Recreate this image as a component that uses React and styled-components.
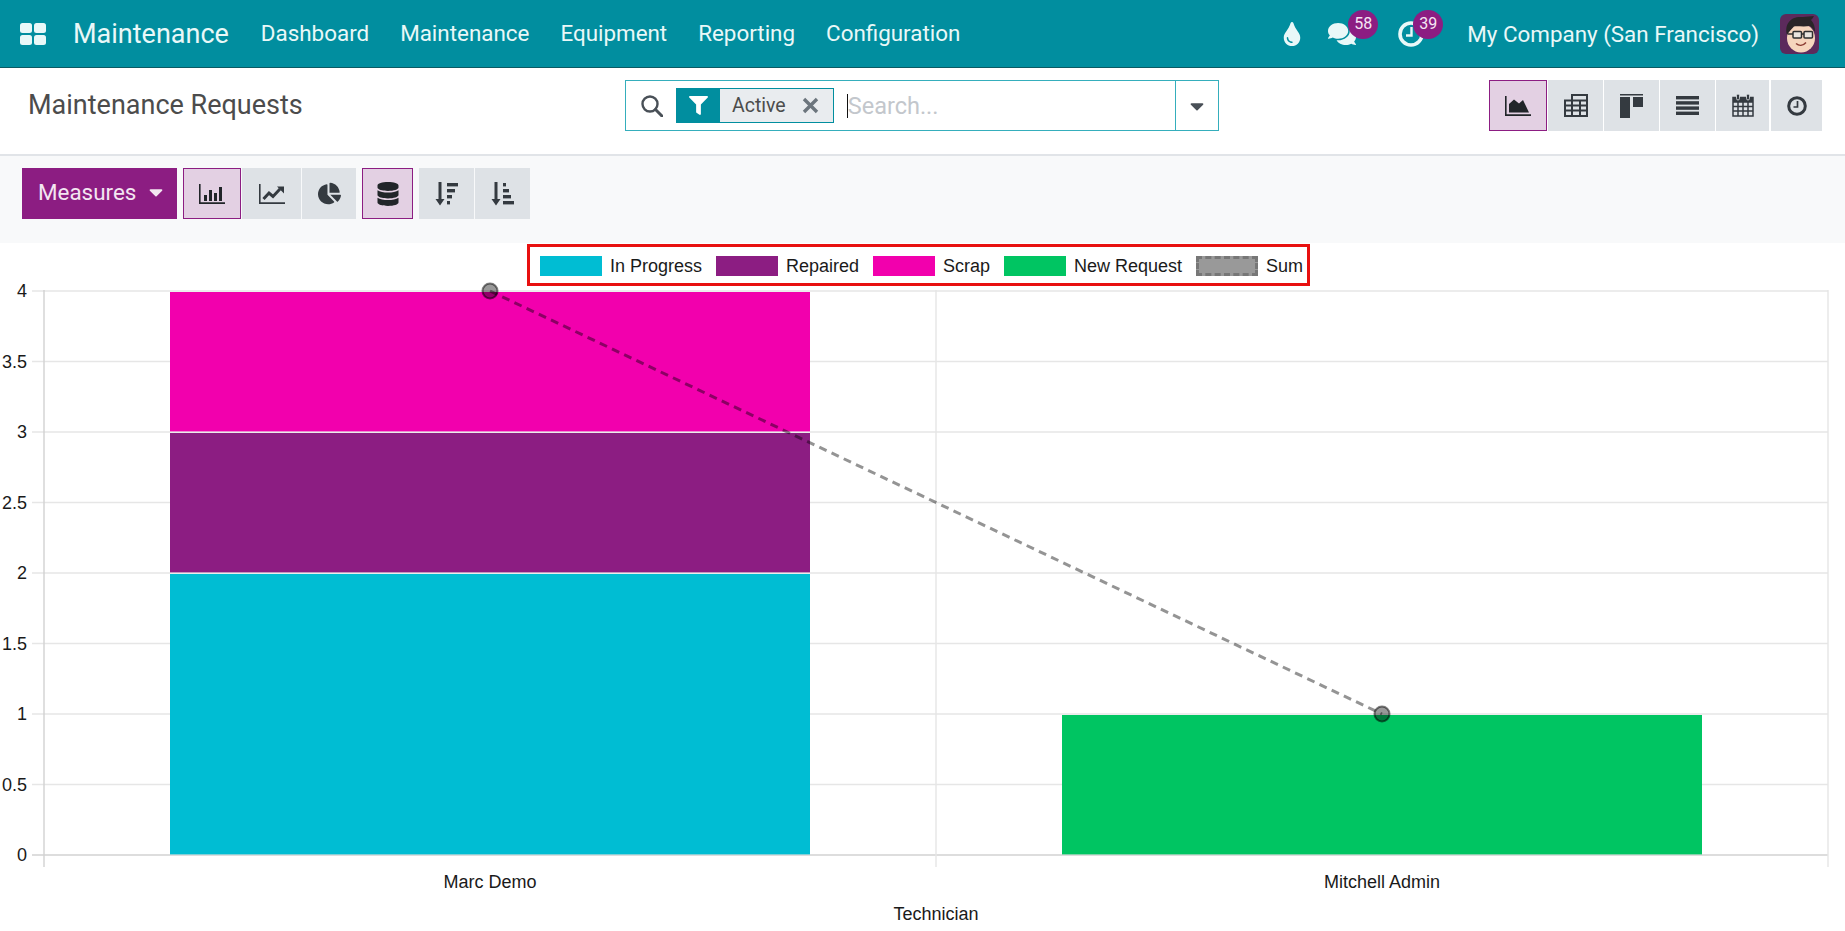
import React from "react";
import styled, { createGlobalStyle } from "styled-components";
import { FaTint, FaComments, FaFilter, FaCaretDown, FaChartPie, FaDatabase } from "react-icons/fa";

const GlobalStyle = createGlobalStyle`
  html, body {
    margin: 0;
    padding: 0;
    height: 931px;
    overflow: hidden;
    background: #fff;
    font-family: Roboto, "Noto Sans", sans-serif;
  }
`;

const Navbar = styled.header`
  display: flex;
  align-items: center;
  box-sizing: border-box;
  height: 68px;
  padding: 0 26px 0 20px;
  background: #018e9f;
  border-bottom: 1px solid #0b5a63;
  color: #e9f8f8;
`;

const Brand = styled.span`
  font-size: 27px;
  margin: 0 32px 0 27px;
`;

const MainMenu = styled.nav`
  display: flex;
  gap: 31px;
  padding-bottom: 1px;
  font-size: 22.4px;
`;

const Systray = styled.div`
  display: flex;
  align-items: center;
  margin-left: auto;
  font-size: 22.4px;
`;

const TrayIcon = styled.div`
  position: relative;
  display: flex;
  align-items: center;
  height: 28px;
  margin-right: ${(p) => p.$mr}px;
`;

const Badge = styled.span`
  position: absolute;
  top: -10px;
  left: ${(p) => p.$left}px;
  width: 30px;
  height: 29px;
  border-radius: 50%;
  background: #8c1d82;
  color: #f5e6f3;
  font-size: 16px;
  line-height: 27px;
  text-align: center;
`;

const Company = styled.span`
  margin-right: 21px;
`;

const ControlPanel = styled.section`
  display: grid;
  grid-template-columns: 597px 594px 1fr;
  box-sizing: border-box;
  height: 88px;
  padding: 12px 23px 0 28px;
  border-bottom: 2px solid #e1e4e8;
  background: #fff;
`;

const Title = styled.h1`
  margin: 7px 0 0;
  font-size: 27px;
  font-weight: 400;
  line-height: 36px;
  color: #4c4c4c;
`;

const SearchBox = styled.div`
  display: flex;
  align-items: center;
  box-sizing: border-box;
  height: 51px;
  border: 1.5px solid #35aebc;
`;

const SearchIcon = styled.div`
  display: flex;
  margin: 0 13px 0 15px;
  color: #495057;
`;

const Facet = styled.div`
  display: flex;
  height: 35px;
  border: 1px solid #018e9f;
  box-sizing: border-box;
  color: #4c4c4c;
  background: #e9ecef;
  font-size: 19.5px;
`;

const FacetIcon = styled.div`
  display: flex;
  align-items: center;
  justify-content: center;
  width: 43px;
  background: #018e9f;
  color: #fff;
  font-size: 19px;
`;

const FacetValue = styled.div`
  display: flex;
  align-items: center;
  gap: 16px;
  padding: 0 14px 0 12px;
`;

const SearchField = styled.div`
  flex: 1;
  display: flex;
  align-items: center;
  margin-left: 13px;
  font-size: 23.5px;
  color: #c3c7cc;
`;

const Caret = styled.div`
  width: 1px;
  height: 24px;
  background: #111;
`;

const SearchToggle = styled.div`
  display: flex;
  align-items: center;
  justify-content: center;
  align-self: stretch;
  width: 42px;
  border-left: 1.5px solid #35aebc;
  color: #495057;
  font-size: 22px;
`;

const ButtonRow = styled.div`
  display: flex;
  justify-content: ${(p) => (p.$end ? "flex-end" : "flex-start")};
`;

const IconButton = styled.button`
  display: flex;
  align-items: center;
  justify-content: center;
  box-sizing: border-box;
  width: ${(p) => p.$w}px;
  height: 51px;
  padding: 0;
  margin-left: ${(p) => p.$ml || 0}px;
  border: ${(p) => (p.$active ? "1.5px solid #8c1d82" : "none")};
  background: ${(p) => (p.$active ? "#e3d0e3" : "#dee2e6")};
  color: ${(p) => (p.$active ? "#212529" : "#343a40")};
  font-size: 23px;
`;

const Toolbar = styled.section`
  display: flex;
  box-sizing: border-box;
  height: 87px;
  padding: 12px 22px 0;
  background: #f8f9fa;
`;

const MeasuresButton = styled.button`
  display: flex;
  align-items: center;
  gap: 9px;
  box-sizing: border-box;
  width: 155px;
  height: 51px;
  padding: 0 0 3px 16px;
  margin-right: 6px;
  border: none;
  background: #8c1d82;
  color: #f3e6f1;
  font-family: inherit;
  font-size: 22.4px;
`;

const ChartArea = styled.main`
  display: flex;
  flex-direction: column;
  align-items: center;
  background: #fff;
  font-family: "Liberation Sans", Arial, sans-serif;
`;

const Legend = styled.div`
  display: flex;
  align-items: center;
  gap: 14px;
  box-sizing: border-box;
  height: 42px;
  margin: 1px 8px 0 0;
  padding: 2px 4px 0 10px;
  border: 3px solid #e81010;
  color: #1a1a1a;
  font-size: 18px;
`;

const LegendItem = styled.div`
  display: flex;
  align-items: center;
  gap: 8px;
`;

const Swatch = styled.span`
  box-sizing: border-box;
  width: 62px;
  height: 20px;
  background: ${(p) => p.$color};
  border: ${(p) => (p.$dashed ? "3px dashed #777" : "none")};
`;

const ChartSvg = styled.svg`
  display: block;
  flex: none;
  overflow: visible;
`;

const AxisText = styled.text`
  fill: #1a1a1a;
  font-size: 18px;
  font-family: "Liberation Sans", Arial, sans-serif;
`;

const Ico = ({ w, h, children }) => (
  <svg width={w} height={h} viewBox={`0 0 ${w} ${h}`} fill="currentColor" aria-hidden="true">
    {children}
  </svg>
);

const AppsIcon = () => (
  <Ico w={26} h={22}>
    <rect x="0" y="0" width="12" height="10" rx="2.5" />
    <rect x="14" y="0" width="12" height="10" rx="2.5" />
    <rect x="0" y="12" width="12" height="10" rx="2.5" />
    <rect x="14" y="12" width="12" height="10" rx="2.5" />
  </Ico>
);

const MagnifyIcon = () => (
  <Ico w={22} h={22}>
    <circle cx="9" cy="9" r="7.5" fill="none" stroke="currentColor" strokeWidth="2.4" />
    <path d="M14.5 14.5L21 21" stroke="currentColor" strokeWidth="3" strokeLinecap="round" />
  </Ico>
);

const CloseIcon = () => (
  <Ico w={17} h={17}>
    <path d="M2 2L15 15M15 2L2 15" stroke="#6c757d" strokeWidth="3.4" />
  </Ico>
);

const ActivityIcon = () => (
  <Ico w={26} h={26}>
    <circle cx="13" cy="13" r="11" fill="none" stroke="currentColor" strokeWidth="3.6" />
    <path d="M13.500 6v8.500H8" fill="none" stroke="currentColor" strokeWidth="2.4" />
  </Ico>
);

const BarsIcon = () => (
  <Ico w={26} h={20}>
    <path d="M0 0h1.6v18.2H26V20H0z" />
    <rect x="5" y="11" width="3" height="6" />
    <rect x="10" y="6" width="3" height="11" />
    <rect x="15" y="9" width="3" height="8" />
    <rect x="20" y="3" width="3" height="14" />
  </Ico>
);

const LineIcon = () => (
  <Ico w={26} h={20}>
    <path d="M0 0h1.6v18.2H26V20H0z" />
    <path d="M4.5 15L10 9l4 3.5L21 5" fill="none" stroke="currentColor" strokeWidth="3" />
    <path d="M18 2.5h7v7z" />
  </Ico>
);

const SortIcon = ({ bars }) => (
  <Ico w={23} h={24}>
    <path d="M3.5 0h3v17h3L5 23.5 .5 17h3z" />
    {bars.map(([y, w]) => (
      <rect key={y} x="12" y={y} width={w} height="3.4" />
    ))}
  </Ico>
);

const AreaIcon = () => (
  <Ico w={26} h={20}>
    <path d="M0 0h1.6v18.2H26V20H0z" />
    <path d="M4 16.5V8l5-4.5 5 4 4-3.5 6 12.5z" />
  </Ico>
);

const TableIcon = () => (
  <Ico w={24} h={23}>
    <path
      d="M8 6.5V1h15v21H1V6.5zM8 6.5h15M1 11.5h22M1 16.5h22M8 6.5V22M16 6.5V22"
      fill="none"
      stroke="currentColor"
      strokeWidth="2"
    />
  </Ico>
);

const KanbanIcon = () => (
  <Ico w={23} h={24}>
    <rect x="0" y="0" width="23" height="1.5" />
    <rect x="0" y="3" width="10" height="21" />
    <rect x="13" y="3" width="10" height="10" />
  </Ico>
);

const ListIcon = () => (
  <Ico w={23} h={19}>
    <rect y="0" width="23" height="3.4" />
    <rect y="5.2" width="23" height="3.4" />
    <rect y="10.4" width="23" height="3.4" />
    <rect y="15.6" width="23" height="3.4" />
  </Ico>
);

const CalendarIcon = () => (
  <Ico w={22} h={23}>
    <path
      d="M1 3.5h20v18.5H1zM1 8h20M1 12.5h20M1 17h20M6 8v14M11 8v14M16 8v14"
      fill="none"
      stroke="currentColor"
      strokeWidth="1.5"
    />
    <path d="M1 3.5h20V8H1z" />
    <rect x="4.5" y="0" width="3" height="6" rx="1.5" stroke="#dee2e6" strokeWidth=".8" />
    <rect x="14.5" y="0" width="3" height="6" rx="1.5" stroke="#dee2e6" strokeWidth=".8" />
  </Ico>
);

const ClockIcon = () => (
  <Ico w={20} h={20}>
    <circle cx="10" cy="10" r="8.3" fill="none" stroke="currentColor" strokeWidth="3" />
    <path d="M10.5 5v6H6.5" fill="none" stroke="currentColor" strokeWidth="1.7" />
  </Ico>
);

const Avatar = () => (
  <svg width="39" height="40" viewBox="0 0 39 40" aria-hidden="true">
    <defs>
      <clipPath id="avatarClip">
        <rect width="39" height="40" rx="6" />
      </clipPath>
    </defs>
    <g clipPath="url(#avatarClip)">
      <rect width="39" height="40" fill="#5c2a5c" />
      <ellipse cx="21" cy="24" rx="14" ry="14.5" fill="#f6d5bd" />
      <path d="M7 21C4 10 11 2 22 3c4 .2 8-1 12-1-1 2-2 3-3 4 3 3 4 7 4 12-2-3-3-5-5-6-5 1-13 0-16 .5-2 2-5 5-7 8.5z" fill="#2a2528" />
      <rect x="13" y="17.5" width="8.5" height="6.5" rx="1" fill="#e9e4de" stroke="#2f2f2f" strokeWidth="1.5" />
      <rect x="24" y="17.5" width="8.5" height="6.5" rx="1" fill="#e9e4de" stroke="#2f2f2f" strokeWidth="1.5" />
      <path d="M21.5 20H24M13 20H8" stroke="#2f2f2f" strokeWidth="1.5" />
      <path d="M16 29.5c3 2.5 7 2.5 10-1" fill="none" stroke="#8a3b32" strokeWidth="1.4" />
    </g>
  </svg>
);

const LEGEND = [
  { label: "In Progress", color: "#00bdd3" },
  { label: "Repaired", color: "#8c1d82" },
  { label: "Scrap", color: "#f200ad" },
  { label: "New Request", color: "#00c562" },
  { label: "Sum", color: "#999999", dashed: true },
];

const TICKS = [0, 0.5, 1, 1.5, 2, 2.5, 3, 3.5, 4];
const tickY = (v) => 855 - v * 141;

const BARS = [
  { x: 170, w: 640, top: 2, bottom: 0, color: "#00bdd3" },
  { x: 170, w: 640, top: 3, bottom: 2, color: "#8c1d82" },
  { x: 170, w: 640, top: 4, bottom: 3, color: "#f200ad" },
  { x: 1062, w: 640, top: 1, bottom: 0, color: "#00c562" },
];

const POINTS = [
  { x: 490, y: tickY(4) },
  { x: 1382, y: tickY(1) },
];

const Chart = () => (
  <ChartSvg width="1845" height="645" viewBox="0 286 1845 645">
    {TICKS.map((t) => (
      <line
        key={t}
        x1="32"
        x2="1828"
        y1={tickY(t)}
        y2={tickY(t)}
        stroke={t === 0 ? "#d2d2d2" : "#e6e6e6"}
        strokeWidth="1.4"
      />
    ))}
    {[44, 936, 1828].map((x) => (
      <line key={x} x1={x} x2={x} y1="290" y2="867" stroke={x === 44 ? "#d2d2d2" : "#e6e6e6"} strokeWidth="1.4" />
    ))}
    {BARS.map((b) => (
      <rect
        key={b.color}
        x={b.x}
        y={tickY(b.top) + 1}
        width={b.w}
        height={tickY(b.bottom) - tickY(b.top) - 1.6}
        fill={b.color}
      />
    ))}
    <line
      x1={POINTS[0].x}
      y1={POINTS[0].y}
      x2={POINTS[1].x}
      y2={POINTS[1].y}
      stroke="rgba(0,0,0,0.42)"
      strokeWidth="3"
      strokeDasharray="8 5.5"
    />
    {POINTS.map((p) => (
      <circle key={p.x} cx={p.x} cy={p.y} r="7.5" fill="rgba(0,0,0,0.4)" stroke="rgba(0,0,0,0.5)" strokeWidth="2" />
    ))}
    {TICKS.map((t) => (
      <AxisText key={t} x="27" y={tickY(t) + 6} textAnchor="end">
        {t}
      </AxisText>
    ))}
    <AxisText x="490" y="888" textAnchor="middle">
      Marc Demo
    </AxisText>
    <AxisText x="1382" y="888" textAnchor="middle">
      Mitchell Admin
    </AxisText>
    <AxisText x="936" y="920" textAnchor="middle">
      Technician
    </AxisText>
  </ChartSvg>
);

const App = () => (
  <>
    <GlobalStyle />
    <Navbar>
      <AppsIcon />
      <Brand>Maintenance</Brand>
      <MainMenu>
        <span>Dashboard</span>
        <span>Maintenance</span>
        <span>Equipment</span>
        <span>Reporting</span>
        <span>Configuration</span>
      </MainMenu>
      <Systray>
        <TrayIcon $mr={24}>
          <FaTint size={24} />
        </TrayIcon>
        <TrayIcon $mr={42}>
          <FaComments size={28} />
          <Badge $left={20}>58</Badge>
        </TrayIcon>
        <TrayIcon $mr={43}>
          <ActivityIcon />
          <Badge $left={15}>39</Badge>
        </TrayIcon>
        <Company>My Company (San Francisco)</Company>
        <Avatar />
      </Systray>
    </Navbar>
    <ControlPanel>
      <Title>Maintenance Requests</Title>
      <SearchBox>
        <SearchIcon>
          <MagnifyIcon />
        </SearchIcon>
        <Facet>
          <FacetIcon>
            <FaFilter />
          </FacetIcon>
          <FacetValue>
            Active
            <CloseIcon />
          </FacetValue>
        </Facet>
        <SearchField>
          <Caret />
          Search...
        </SearchField>
        <SearchToggle>
          <FaCaretDown />
        </SearchToggle>
      </SearchBox>
      <ButtonRow $end>
        <IconButton $w={58} $active>
          <AreaIcon />
        </IconButton>
        <IconButton $w={55} $ml={1}>
          <TableIcon />
        </IconButton>
        <IconButton $w={55} $ml={1}>
          <KanbanIcon />
        </IconButton>
        <IconButton $w={55} $ml={1}>
          <ListIcon />
        </IconButton>
        <IconButton $w={53} $ml={1}>
          <CalendarIcon />
        </IconButton>
        <IconButton $w={51} $ml={2}>
          <ClockIcon />
        </IconButton>
      </ButtonRow>
    </ControlPanel>
    <Toolbar>
      <MeasuresButton>
        Measures
        <FaCaretDown size={22} />
      </MeasuresButton>
      <IconButton $w={58} $active>
        <BarsIcon />
      </IconButton>
      <IconButton $w={59} $ml={1}>
        <LineIcon />
      </IconButton>
      <IconButton $w={54} $ml={1}>
        <FaChartPie />
      </IconButton>
      <IconButton $w={51} $ml={6} $active>
        <FaDatabase size={24} />
      </IconButton>
      <IconButton $w={55} $ml={6}>
        <SortIcon
          bars={[
            [1, 11],
            [7, 8],
            [13, 5],
            [19, 3],
          ]}
        />
      </IconButton>
      <IconButton $w={55} $ml={1}>
        <SortIcon
          bars={[
            [1, 3],
            [7, 6],
            [13, 8],
            [19, 11],
          ]}
        />
      </IconButton>
    </Toolbar>
    <ChartArea>
      <Legend>
        {LEGEND.map((item) => (
          <LegendItem key={item.label}>
            <Swatch $color={item.color} $dashed={item.dashed} />
            {item.label}
          </LegendItem>
        ))}
      </Legend>
      <Chart />
    </ChartArea>
  </>
);

export default App;
